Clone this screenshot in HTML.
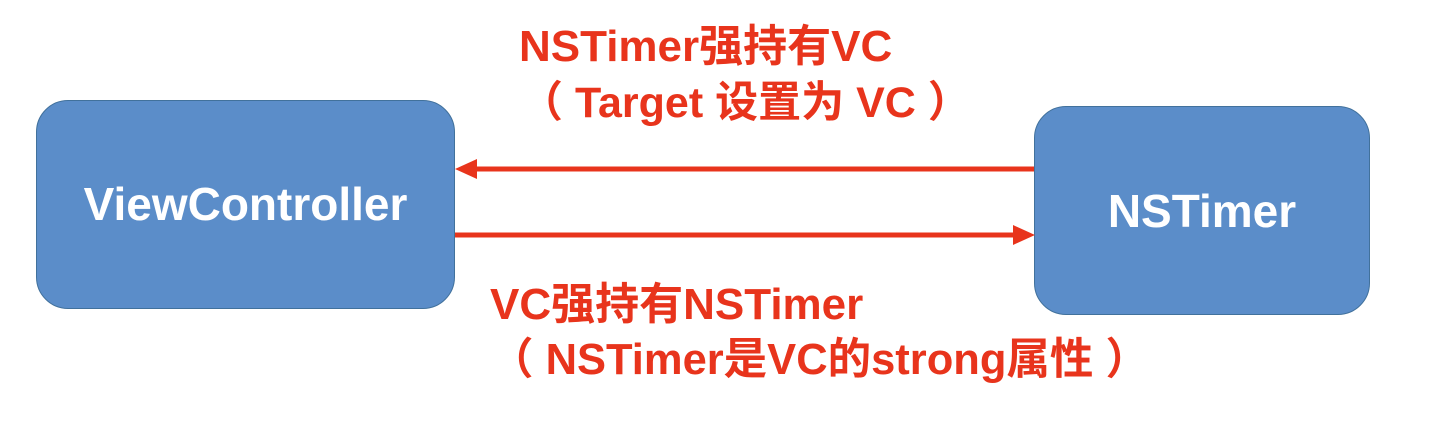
<!DOCTYPE html>
<html><head><meta charset="utf-8"><style>
body{margin:0;width:1436px;height:430px;background:#fff;position:relative;overflow:hidden;font-family:"Liberation Sans","Noto Sans CJK SC",sans-serif;font-weight:bold}
.box{position:absolute;background:#5b8dc9;border:1.5px solid #41719c;border-radius:32px;box-sizing:border-box;color:#fff;font-size:46px;display:flex;align-items:center;justify-content:center}
.t{position:absolute;color:#e8341c;font-size:44px;white-space:nowrap;line-height:1}
</style></head><body>
<div class="box" style="left:36px;top:100px;width:419px;height:209px;padding-bottom:2px">ViewController</div>
<div class="box" style="left:1034px;top:106px;width:336px;height:209px;padding-bottom:0px">NSTimer</div>
<svg style="position:absolute;left:0;top:0" width="1436" height="430">
<line x1="472" y1="169" x2="1034" y2="169" stroke="#e8341c" stroke-width="5"/>
<polygon points="455,169 477,159 477,179" fill="#e8341c"/>
<line x1="455" y1="235" x2="1016" y2="235" stroke="#e8341c" stroke-width="5"/>
<polygon points="1035,235 1013,225 1013,245" fill="#e8341c"/>
</svg>
<div class="t" style="left:519px;top:25px">NSTimer强持有VC</div>
<div class="t" style="left:520px;top:82px;font-size:43px">（ Target 设置为 VC ）</div>
<div class="t" style="left:490px;top:283px">VC强持有NSTimer</div>
<div class="t" style="left:490px;top:339px;font-size:43.5px">（ NSTimer是VC的strong属性 ）</div>
</body></html>
